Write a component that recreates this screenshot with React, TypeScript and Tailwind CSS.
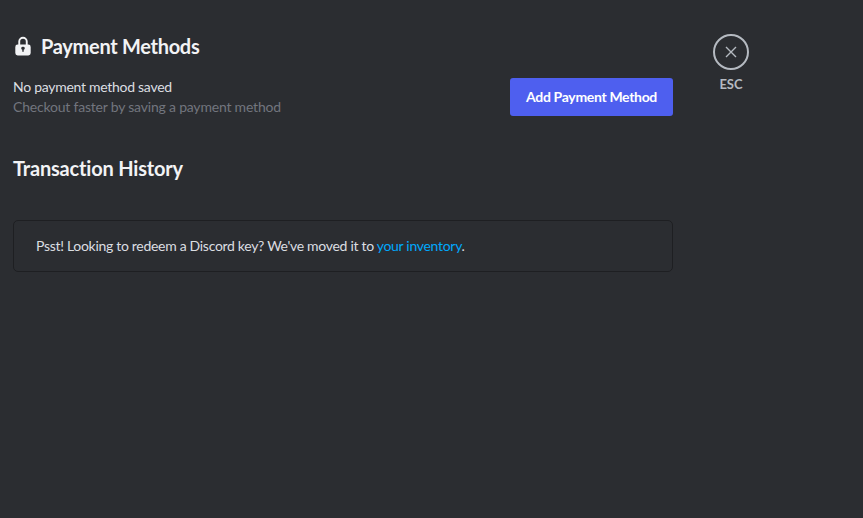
export default function App() {
  return (
    <div className="flex h-screen w-full overflow-hidden bg-[#2b2d31] pl-[13px] font-['Lato','Noto_Sans',sans-serif] text-sm text-[#dbdee1] [font-variant-ligatures:none]">
      <main className="w-[660px]">
        <header className="mt-[34px] flex h-6 items-center">
          <svg width="20" height="20" viewBox="0 0 20 20" className="shrink-0">
            <path
              fill="#f2f3f5"
              fillRule="evenodd"
              d="M5.300 8.500V5.500a4.700 4.700 0 0 1 9.400 0V8.500h.6A2.400 2.400 0 0 1 17.700 10.900v6.200a2.400 2.400 0 0 1-2.400 2.400H4.700a2.400 2.400 0 0 1-2.400-2.400v-6.200A2.400 2.400 0 0 1 4.700 8.500Zm1.900 0h5.600V5.500a2.800 2.800 0 0 0-5.600 0ZM8.200 12.200a1.800 1.800 0 0 0 1.100 1.600v2h1.400v-2a1.800 1.800 0 0 0 1.100-1.600 1.800 1.400 0 0 0-3.600 0Z"
            />
          </svg>
          <h1 className="ml-2 text-xl leading-6 font-bold tracking-[-0.3px] whitespace-nowrap text-[#f2f3f5]">
            Payment Methods
          </h1>
        </header>
        <section className="mt-5 flex h-[38px] items-center justify-between">
          <div className="whitespace-nowrap">
            <p className="leading-5 tracking-[-0.28px]">No payment method saved</p>
            <p className="leading-5 tracking-[-0.2px] text-[#72757e]">
              Checkout faster by saving a payment method
            </p>
          </div>
          <button className="h-[38px] w-[163px] rounded-[3px] bg-[#4e5fef] font-bold tracking-[-0.32px] whitespace-nowrap text-white">
            Add Payment Method
          </button>
        </section>
        <h2 className="mt-10 text-xl leading-6 font-bold tracking-[-0.19px] whitespace-nowrap text-[#f2f3f5]">
          Transaction History
        </h2>
        <div className="mt-10 flex h-[52px] items-center rounded-[5px] border border-[#1e1f22] pl-[22px]">
          <p className="tracking-[-0.3px] whitespace-nowrap">
            Psst! Looking to redeem a Discord key? We've moved it to{" "}
            <a className="text-[#00a8fc]">your inventory</a>.
          </p>
        </div>
      </main>
      <aside className="mt-[34px] ml-10 flex w-9 flex-col items-center">
        <button className="flex size-9 items-center justify-center rounded-full border-2 border-[#b5bac1]">
          <svg width="12" height="12" viewBox="0 0 12 12" fill="none" stroke="#b5bac1" strokeWidth="1.400">
            <path d="M1 1l10 10M11 1L1 11" />
          </svg>
        </button>
        <span className="mt-[6px] text-[13px] leading-4 font-bold text-[#b5bac1]">
          ESC
        </span>
      </aside>
    </div>
  );
}
